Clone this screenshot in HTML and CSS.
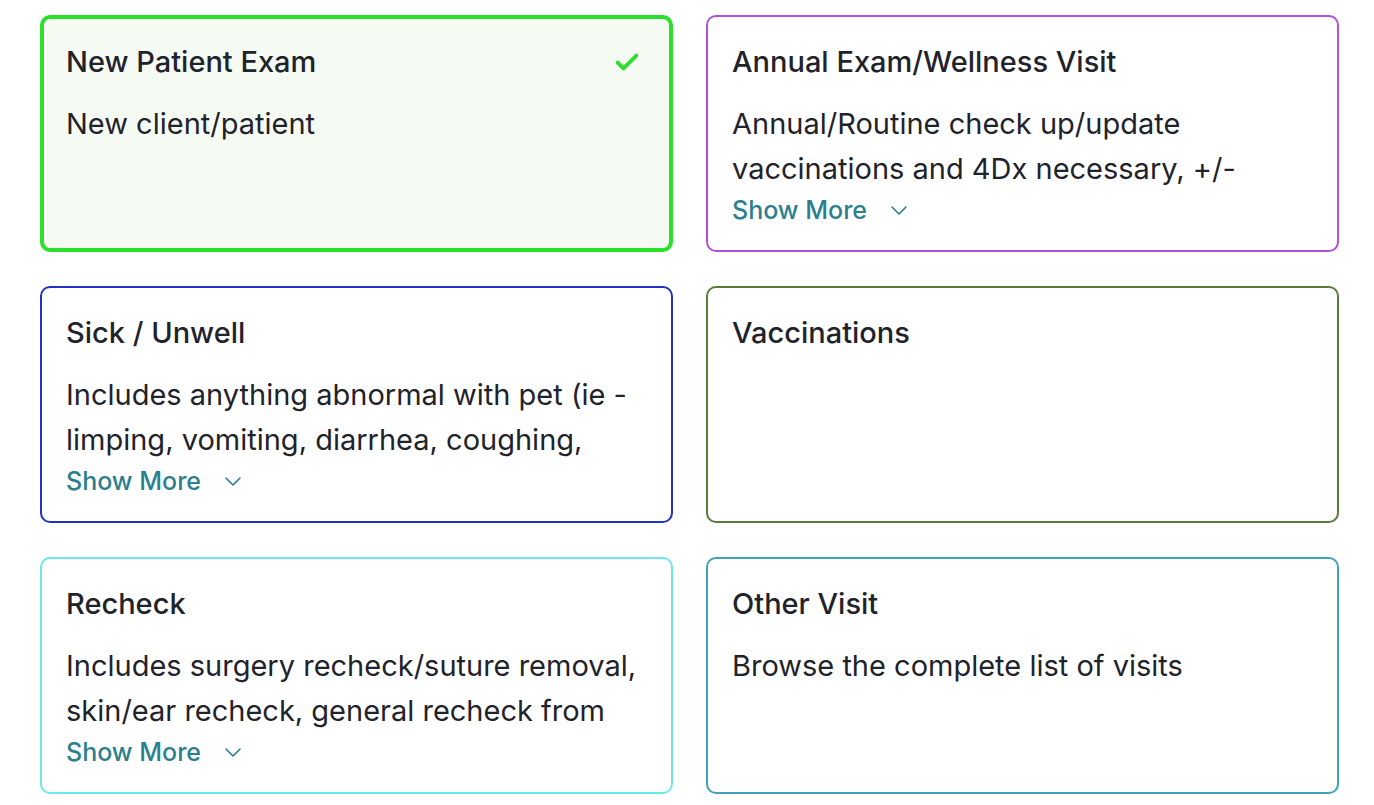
FILE: index.html
```html
<!DOCTYPE html>
<html lang="en">
<head>
<meta charset="utf-8">
<link rel="stylesheet" href="styles.css">
</head>
<body>
<div class="grid">
  <div class="card selected c-green">
    <div class="head">
      <div class="title">New Patient Exam</div>
      <svg class="check" viewBox="0 0 24 24" width="28" height="28"><path d="M4 12.5l5 5L20 6.5" fill="none" stroke="#2fdc2f" stroke-width="3.4" stroke-linecap="round" stroke-linejoin="round"/></svg>
    </div>
    <div class="desc">New client/patient</div>
  </div>
  <div class="card c-purple">
    <div class="head"><div class="title">Annual Exam/Wellness Visit</div></div>
    <div class="desc clamp">Annual/Routine check up/update vaccinations and 4Dx necessary, +/- heartworm prevention and flea/tick prevention refills</div>
    <div class="more">Show More <svg class="chev" viewBox="0 0 20 20" width="20" height="20"><path d="M3 7l7 7 7-7" fill="none" stroke="#2b7f8e" stroke-width="1.6" stroke-linecap="round" stroke-linejoin="round"/></svg></div>
  </div>
  <div class="card c-blue">
    <div class="head"><div class="title">Sick / Unwell</div></div>
    <div class="desc clamp">Includes anything abnormal with pet (ie - limping, vomiting, diarrhea, coughing, sneezing, itching, not eating, lethargy, etc.)</div>
    <div class="more">Show More <svg class="chev" viewBox="0 0 20 20" width="20" height="20"><path d="M3 7l7 7 7-7" fill="none" stroke="#2b7f8e" stroke-width="1.6" stroke-linecap="round" stroke-linejoin="round"/></svg></div>
  </div>
  <div class="card c-olive">
    <div class="head"><div class="title">Vaccinations</div></div>
  </div>
  <div class="card c-cyan">
    <div class="head"><div class="title">Recheck</div></div>
    <div class="desc clamp">Includes surgery recheck/suture removal, skin/ear recheck, general recheck from previous visit</div>
    <div class="more">Show More <svg class="chev" viewBox="0 0 20 20" width="20" height="20"><path d="M3 7l7 7 7-7" fill="none" stroke="#2b7f8e" stroke-width="1.6" stroke-linecap="round" stroke-linejoin="round"/></svg></div>
  </div>
  <div class="card c-teal">
    <div class="head"><div class="title">Other Visit</div></div>
    <div class="desc">Browse the complete list of visits</div>
  </div>
</div>
</body>
</html>
```
FILE: styles.css
```css
html, body { margin: 0; padding: 0; background: #fff; }
body {
  font-family: Inter, "Noto Sans", sans-serif;
  color: #1f232b;
}
.grid {
  display: grid;
  grid-template-columns: 633px 633px;
  grid-auto-rows: 237px;
  column-gap: 33px;
  row-gap: 34px;
  padding: 15px 0 0 40px;
}
.card {
  box-sizing: border-box;
  border: 2px solid #ccc;
  border-radius: 10px;
  padding: 27px 24px 0 24px;
  overflow: hidden;
}
.card.selected {
  border-width: 4px;
  padding: 25px 22px 0 22px;
  background: #f5fbf3;
}
.c-green { border-color: #2be02b; }
.c-purple { border-color: #b24fdc; }
.c-blue { border-color: #2233c4; }
.c-olive { border-color: #5a7a3a; }
.c-cyan { border-color: #6ee7e7; }
.c-teal { border-color: #3ea3b8; }
.head {
  display: flex;
  align-items: center;
  justify-content: space-between;
}
.title {
  font-size: 29px;
  line-height: 36px;
  font-weight: 500;
}
.check { margin-right: 6px; }
.desc {
  margin-top: 21px;
  font-size: 29px;
  line-height: 45px;
}
.clamp {
  max-height: 90px;
  overflow: hidden;
}
.more {
  display: flex;
  align-items: center;
  gap: 22px;
  color: #2b7f8e;
  font-size: 25px;
  line-height: 36px;
  font-weight: 500;
  margin-top: 1px;
}
```
